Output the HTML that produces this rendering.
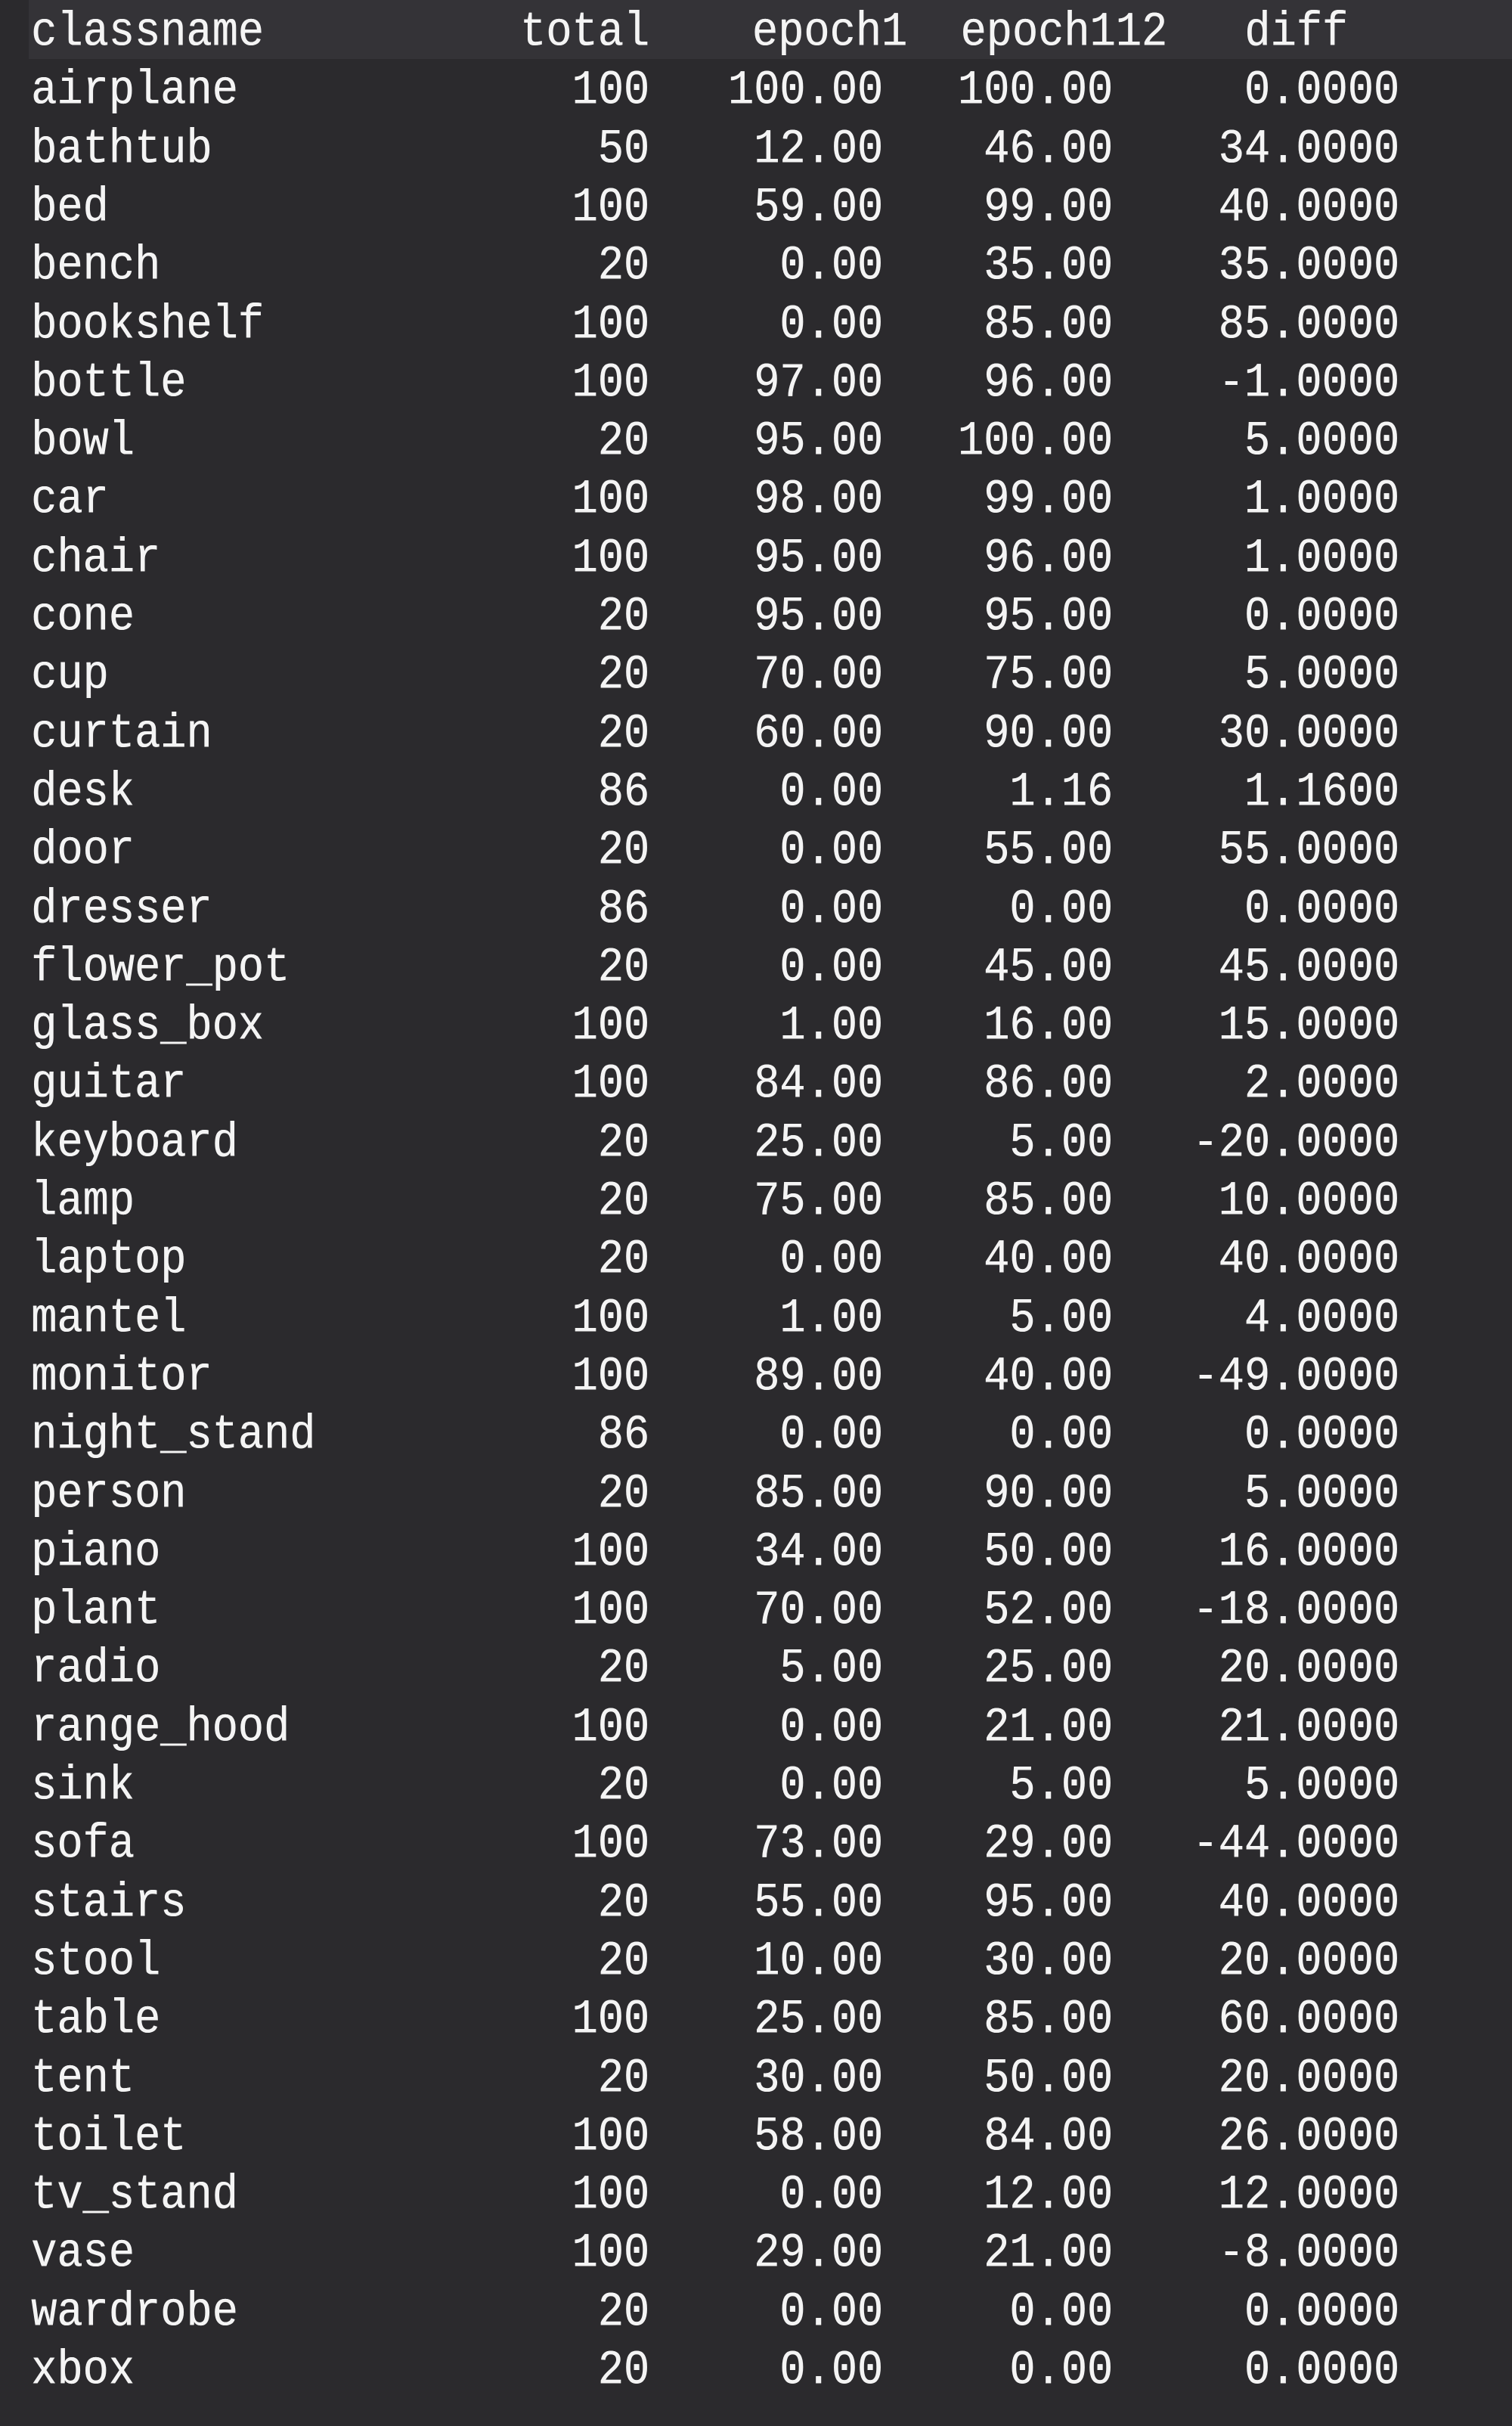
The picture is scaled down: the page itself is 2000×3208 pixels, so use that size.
<!DOCTYPE html>
<html><head><meta charset="utf-8"><style>
html,body{margin:0;padding:0;}
body{width:2000px;height:3208px;background:#2b2a2d;position:relative;overflow:hidden;font-family:"Liberation Mono",monospace;font-size:57px;color:#f4f4f4;}
.hb{position:absolute;left:38px;top:0;width:1962px;height:78px;background:#343337;}
.r{position:absolute;left:0;width:2000px;height:77.3px;line-height:77.3px;padding-top:6px;box-sizing:border-box;white-space:pre;}
.r span{position:absolute;transform:scaleY(1.12);text-shadow:0.5px 0 0 #f4f4f4;}
.n{left:41px;}
.t{right:1141px;}
.a{right:832px;}
.b{right:528px;}
.d{right:149px;}
.h .a{right:800px;}
.h .b{right:456px;}
.h .d{right:217px;}
</style></head><body>
<div class="hb"></div>
<div class="r h" style="top:0px"><span class="n">classname</span><span class="t">total</span><span class="a">epoch1</span><span class="b">epoch112</span><span class="d">diff</span></div>
<div class="r" style="top:77.3px"><span class="n">airplane</span><span class="t">100</span><span class="a">100.00</span><span class="b">100.00</span><span class="d">0.0000</span></div>
<div class="r" style="top:154.6px"><span class="n">bathtub</span><span class="t">50</span><span class="a">12.00</span><span class="b">46.00</span><span class="d">34.0000</span></div>
<div class="r" style="top:231.9px"><span class="n">bed</span><span class="t">100</span><span class="a">59.00</span><span class="b">99.00</span><span class="d">40.0000</span></div>
<div class="r" style="top:309.2px"><span class="n">bench</span><span class="t">20</span><span class="a">0.00</span><span class="b">35.00</span><span class="d">35.0000</span></div>
<div class="r" style="top:386.5px"><span class="n">bookshelf</span><span class="t">100</span><span class="a">0.00</span><span class="b">85.00</span><span class="d">85.0000</span></div>
<div class="r" style="top:463.8px"><span class="n">bottle</span><span class="t">100</span><span class="a">97.00</span><span class="b">96.00</span><span class="d">-1.0000</span></div>
<div class="r" style="top:541.1px"><span class="n">bowl</span><span class="t">20</span><span class="a">95.00</span><span class="b">100.00</span><span class="d">5.0000</span></div>
<div class="r" style="top:618.4px"><span class="n">car</span><span class="t">100</span><span class="a">98.00</span><span class="b">99.00</span><span class="d">1.0000</span></div>
<div class="r" style="top:695.7px"><span class="n">chair</span><span class="t">100</span><span class="a">95.00</span><span class="b">96.00</span><span class="d">1.0000</span></div>
<div class="r" style="top:773px"><span class="n">cone</span><span class="t">20</span><span class="a">95.00</span><span class="b">95.00</span><span class="d">0.0000</span></div>
<div class="r" style="top:850.3px"><span class="n">cup</span><span class="t">20</span><span class="a">70.00</span><span class="b">75.00</span><span class="d">5.0000</span></div>
<div class="r" style="top:927.6px"><span class="n">curtain</span><span class="t">20</span><span class="a">60.00</span><span class="b">90.00</span><span class="d">30.0000</span></div>
<div class="r" style="top:1004.9px"><span class="n">desk</span><span class="t">86</span><span class="a">0.00</span><span class="b">1.16</span><span class="d">1.1600</span></div>
<div class="r" style="top:1082.2px"><span class="n">door</span><span class="t">20</span><span class="a">0.00</span><span class="b">55.00</span><span class="d">55.0000</span></div>
<div class="r" style="top:1159.5px"><span class="n">dresser</span><span class="t">86</span><span class="a">0.00</span><span class="b">0.00</span><span class="d">0.0000</span></div>
<div class="r" style="top:1236.8px"><span class="n">flower_pot</span><span class="t">20</span><span class="a">0.00</span><span class="b">45.00</span><span class="d">45.0000</span></div>
<div class="r" style="top:1314.1px"><span class="n">glass_box</span><span class="t">100</span><span class="a">1.00</span><span class="b">16.00</span><span class="d">15.0000</span></div>
<div class="r" style="top:1391.4px"><span class="n">guitar</span><span class="t">100</span><span class="a">84.00</span><span class="b">86.00</span><span class="d">2.0000</span></div>
<div class="r" style="top:1468.7px"><span class="n">keyboard</span><span class="t">20</span><span class="a">25.00</span><span class="b">5.00</span><span class="d">-20.0000</span></div>
<div class="r" style="top:1546px"><span class="n">lamp</span><span class="t">20</span><span class="a">75.00</span><span class="b">85.00</span><span class="d">10.0000</span></div>
<div class="r" style="top:1623.3px"><span class="n">laptop</span><span class="t">20</span><span class="a">0.00</span><span class="b">40.00</span><span class="d">40.0000</span></div>
<div class="r" style="top:1700.6px"><span class="n">mantel</span><span class="t">100</span><span class="a">1.00</span><span class="b">5.00</span><span class="d">4.0000</span></div>
<div class="r" style="top:1777.9px"><span class="n">monitor</span><span class="t">100</span><span class="a">89.00</span><span class="b">40.00</span><span class="d">-49.0000</span></div>
<div class="r" style="top:1855.2px"><span class="n">night_stand</span><span class="t">86</span><span class="a">0.00</span><span class="b">0.00</span><span class="d">0.0000</span></div>
<div class="r" style="top:1932.5px"><span class="n">person</span><span class="t">20</span><span class="a">85.00</span><span class="b">90.00</span><span class="d">5.0000</span></div>
<div class="r" style="top:2009.8px"><span class="n">piano</span><span class="t">100</span><span class="a">34.00</span><span class="b">50.00</span><span class="d">16.0000</span></div>
<div class="r" style="top:2087.1px"><span class="n">plant</span><span class="t">100</span><span class="a">70.00</span><span class="b">52.00</span><span class="d">-18.0000</span></div>
<div class="r" style="top:2164.4px"><span class="n">radio</span><span class="t">20</span><span class="a">5.00</span><span class="b">25.00</span><span class="d">20.0000</span></div>
<div class="r" style="top:2241.7px"><span class="n">range_hood</span><span class="t">100</span><span class="a">0.00</span><span class="b">21.00</span><span class="d">21.0000</span></div>
<div class="r" style="top:2319px"><span class="n">sink</span><span class="t">20</span><span class="a">0.00</span><span class="b">5.00</span><span class="d">5.0000</span></div>
<div class="r" style="top:2396.3px"><span class="n">sofa</span><span class="t">100</span><span class="a">73.00</span><span class="b">29.00</span><span class="d">-44.0000</span></div>
<div class="r" style="top:2473.6px"><span class="n">stairs</span><span class="t">20</span><span class="a">55.00</span><span class="b">95.00</span><span class="d">40.0000</span></div>
<div class="r" style="top:2550.9px"><span class="n">stool</span><span class="t">20</span><span class="a">10.00</span><span class="b">30.00</span><span class="d">20.0000</span></div>
<div class="r" style="top:2628.2px"><span class="n">table</span><span class="t">100</span><span class="a">25.00</span><span class="b">85.00</span><span class="d">60.0000</span></div>
<div class="r" style="top:2705.5px"><span class="n">tent</span><span class="t">20</span><span class="a">30.00</span><span class="b">50.00</span><span class="d">20.0000</span></div>
<div class="r" style="top:2782.8px"><span class="n">toilet</span><span class="t">100</span><span class="a">58.00</span><span class="b">84.00</span><span class="d">26.0000</span></div>
<div class="r" style="top:2860.1px"><span class="n">tv_stand</span><span class="t">100</span><span class="a">0.00</span><span class="b">12.00</span><span class="d">12.0000</span></div>
<div class="r" style="top:2937.4px"><span class="n">vase</span><span class="t">100</span><span class="a">29.00</span><span class="b">21.00</span><span class="d">-8.0000</span></div>
<div class="r" style="top:3014.7px"><span class="n">wardrobe</span><span class="t">20</span><span class="a">0.00</span><span class="b">0.00</span><span class="d">0.0000</span></div>
<div class="r" style="top:3092px"><span class="n">xbox</span><span class="t">20</span><span class="a">0.00</span><span class="b">0.00</span><span class="d">0.0000</span></div>
</body></html>
